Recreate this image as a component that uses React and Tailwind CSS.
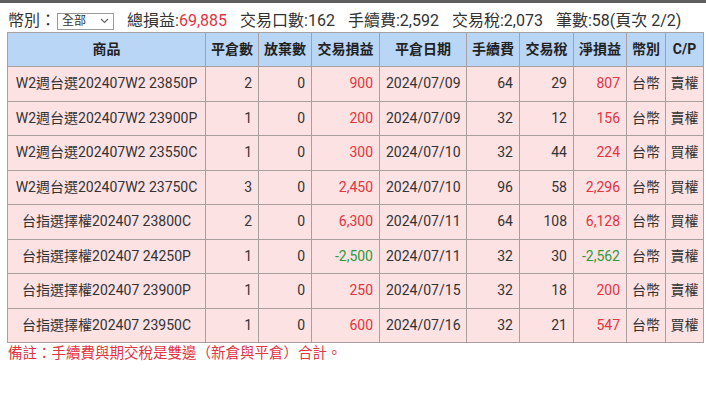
const rows = [
  { name: "W2週台選202407W2 23850P", close: 2, give: 0, pl: "900", date: "2024/07/09", fee: 64, tax: 29, net: "807", cur: "台幣", cp: "賣權" },
  { name: "W2週台選202407W2 23900P", close: 1, give: 0, pl: "200", date: "2024/07/09", fee: 32, tax: 12, net: "156", cur: "台幣", cp: "賣權" },
  { name: "W2週台選202407W2 23550C", close: 1, give: 0, pl: "300", date: "2024/07/10", fee: 32, tax: 44, net: "224", cur: "台幣", cp: "買權" },
  { name: "W2週台選202407W2 23750C", close: 3, give: 0, pl: "2,450", date: "2024/07/10", fee: 96, tax: 58, net: "2,296", cur: "台幣", cp: "買權" },
  { name: "台指選擇權202407 23800C", close: 2, give: 0, pl: "6,300", date: "2024/07/11", fee: 64, tax: 108, net: "6,128", cur: "台幣", cp: "買權" },
  { name: "台指選擇權202407 24250P", close: 1, give: 0, pl: "-2,500", date: "2024/07/11", fee: 32, tax: 30, net: "-2,562", cur: "台幣", cp: "賣權" },
  { name: "台指選擇權202407 23900P", close: 1, give: 0, pl: "250", date: "2024/07/15", fee: 32, tax: 18, net: "200", cur: "台幣", cp: "賣權" },
  { name: "台指選擇權202407 23950C", close: 1, give: 0, pl: "600", date: "2024/07/16", fee: 32, tax: 21, net: "547", cur: "台幣", cp: "買權" },
];

const headers = [
  { label: "商品", w: "w-[198px]" },
  { label: "平倉數", w: "w-[53px]" },
  { label: "放棄數", w: "w-[53px]" },
  { label: "交易損益", w: "w-[68px]" },
  { label: "平倉日期", w: "w-[87px]" },
  { label: "手續費", w: "w-[53px]" },
  { label: "交易稅", w: "w-[54px]" },
  { label: "淨損益", w: "w-[53px]" },
  { label: "幣別", w: "w-[39px]" },
  { label: "C/P", w: "w-[38px]" },
];

function money(v) {
  return v.startsWith("-") ? "text-[#2f9a3c]" : "text-[#e3343f]";
}

export default function App() {
  const td = "border border-[#aa9f9f] px-[6px] h-[34.5px]";

  return (
    <div
      className="w-[706px] h-[415px] bg-white text-[#333] overflow-hidden"
      style={{ fontFamily: 'Roboto, "Noto Sans CJK TC", sans-serif' }}
    >
      <div className="h-[3px] bg-[#5f5f5f]" />
      <div className="h-[29px] pt-[7px] pl-[8px] flex items-center text-[16px] text-[#333] whitespace-nowrap">
        <span>幣別：</span>
        <div className="ml-[1px] w-[57px] h-[17px] border border-[#9a9a9a] bg-white flex items-center justify-between px-[4px] text-[12px] text-[#333]">
          <span>全部</span>
          <svg width="9" height="6" viewBox="0 0 9 6" fill="none" stroke="#666" strokeWidth="1.2">
            <path d="M1 1l3.5 3.5L8 1" />
          </svg>
        </div>
        <span className="ml-[13px]">
          總損益:<span className="text-[#e3343f]">69,885</span>
        </span>
        <span className="ml-[13px]">交易口數:162</span>
        <span className="ml-[13px]">手續費:2,592</span>
        <span className="ml-[13px]">交易稅:2,073</span>
        <span className="ml-[13px]">筆數:58(頁次 2/2)</span>
      </div>

      <table className="ml-[7px] table-fixed border-collapse w-[696px] text-[14px]">
        <thead>
          <tr className="bg-[#bad6f7]">
            {headers.map((h) => (
              <th
                key={h.label}
                className={`${h.w} border border-[#aa9f9f] h-[34px] px-0 font-bold text-[14px] text-[#222] text-center`}
              >
                {h.label}
              </th>
            ))}
          </tr>
        </thead>
        <tbody>
          {rows.map((r) => (
            <tr key={r.name} className="bg-[#fde2e4]">
              <td className={`${td} text-center whitespace-nowrap`}>{r.name}</td>
              <td className={`${td} text-right`}>{r.close}</td>
              <td className={`${td} text-right`}>{r.give}</td>
              <td className={`${td} text-right ${money(r.pl)}`}>{r.pl}</td>
              <td className={`${td} text-center`}>{r.date}</td>
              <td className={`${td} text-right`}>{r.fee}</td>
              <td className={`${td} text-right`}>{r.tax}</td>
              <td className={`${td} text-right ${money(r.net)}`}>{r.net}</td>
              <td className="border border-[#aa9f9f] px-0 text-center">{r.cur}</td>
              <td className="border border-[#aa9f9f] px-0 text-center">{r.cp}</td>
            </tr>
          ))}
        </tbody>
      </table>

      <div className="pl-[8px] text-[14.5px] text-[#e3343f]">
        備註：手續費與期交稅是雙邊（新倉與平倉）合計。
      </div>
    </div>
  );
}
